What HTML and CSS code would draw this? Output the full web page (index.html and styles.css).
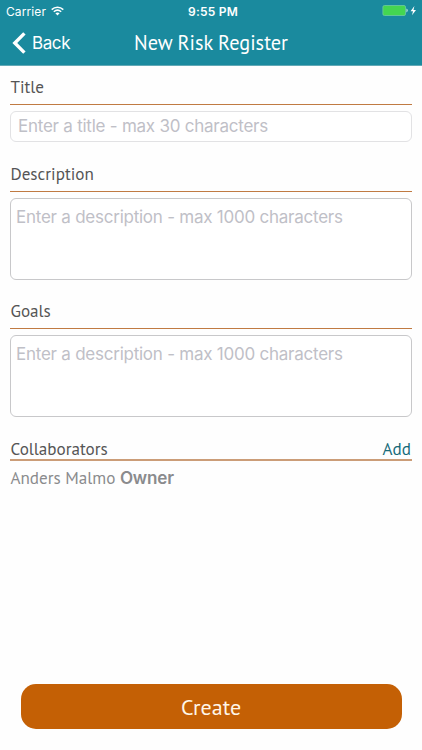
FILE: index.html
```html
<!DOCTYPE html>
<html lang="en">
  <head>
    <meta charset="UTF-8" />
    <meta name="viewport" content="width=device-width, initial-scale=1.0" />
    <title>New Risk Register</title>
    <link rel="stylesheet" href="styles.css">
  </head>
  <body>
    <header class="header">
      <div class="status-bar">
        <div class="carrier">
          <span>Carrier</span>
          <svg class="wifi" width="13" height="10" viewBox="0 0 13 10" fill="none" stroke="#fff" stroke-width="1.5">
            <path d="M0.7 3.6 C4 0.4 9 0.4 12.3 3.6" />
            <path d="M2.8 5.8 C5 3.8 8 3.8 10.2 5.8" />
            <path d="M4.4 7.3 C5.7 6.2 7.3 6.2 8.6 7.3 L6.5 9.5 Z" fill="#fff" stroke="none" />
          </svg>
        </div>
        <div class="time">9:55 PM</div>
        <div class="battery">
          <svg width="36" height="12" viewBox="0 0 36 12">
            <rect x="0.9" y="0.5" width="22.6" height="10" rx="1.5" fill="#44d651" stroke="#6fcba0" stroke-width="0.8" />
            <path d="M24.4 3.6 C26.3 4.2 26.3 6.8 24.4 7.4 Z" fill="#b5e4d8" />
            <path d="M32.4 1 L28.6 6.2 H31 L30 10.2 L34 4.9 H31.5 Z" fill="#fff" />
          </svg>
        </div>
      </div>
      <div class="nav-bar">
        <a class="back">
          <svg width="14" height="22" viewBox="0 0 14 22" fill="none" stroke="#fff" stroke-width="3.4">
            <path d="M12.4 1.4 L2.8 11 L12.4 20.6" />
          </svg>
          <span>Back</span>
        </a>
        <h1>New Risk Register</h1>
      </div>
    </header>

    <main class="form">
      <div class="form-group">
        <label for="title">Title</label>
        <input type="text" id="title" placeholder="Enter a title - max 30 characters" />
      </div>

      <div class="form-group">
        <label for="description">Description</label>
        <textarea id="description" placeholder="Enter a description - max 1000 characters"></textarea>
      </div>

      <div class="form-group">
        <label for="goals">Goals</label>
        <textarea id="goals" placeholder="Enter a description - max 1000 characters"></textarea>
      </div>

      <div class="collaborators">
        <div class="collaborators-head">
          <h2>Collaborators</h2>
          <a class="add">Add</a>
        </div>
        <p class="person"><span>Anders Malmo</span> <b>Owner</b></p>
      </div>

      <button class="create-btn">Create</button>
    </main>
  </body>
</html>
```

FILE: styles.css
```css
* {
  margin: 0;
  padding: 0;
  box-sizing: border-box;
}

body {
  font-family: "PT Sans", "Noto Sans", sans-serif;
  background: #fefefe;
  height: 750px;
  display: flex;
  flex-direction: column;
  overflow: hidden;
}

.header {
  height: 66px;
  background: #1a8a9e;
  border-bottom: 1px solid #62a9b6;
  color: white;
}

.status-bar {
  display: grid;
  grid-template-columns: 1fr auto 1fr;
  align-items: center;
  height: 22px;
  padding: 0 4px 0 6px;
  font-family: Inter, sans-serif;
  font-size: 12px;
}

.carrier {
  display: flex;
  align-items: center;
  gap: 5px;
  letter-spacing: 0.1px;
}

.time {
  padding-left: 2px;
  font-weight: 600;
  letter-spacing: 0.2px;
}

.battery {
  display: flex;
  justify-content: flex-end;
}

.nav-bar {
  display: grid;
  grid-template-columns: 1fr auto 1fr;
  align-items: center;
  height: 42px;
  padding: 0 12px;
}

.back {
  display: flex;
  align-items: center;
  gap: 6px;
  font-family: Inter, sans-serif;
  font-size: 17px;
  letter-spacing: -0.4px;
}

.nav-bar h1 {
  padding-bottom: 2px;
  font-size: 20.3px;
  font-weight: 400;
}

.form {
  flex: 1;
  display: flex;
  flex-direction: column;
  padding: 10px 10px 21px;
}

.form-group {
  display: flex;
  flex-direction: column;
}

.form-group label {
  height: 29px;
  margin-bottom: 6px;
  padding-left: 0.5px;
  border-bottom: 1px solid #c07a42;
  color: #555;
  font-size: 17.1px;
  line-height: 23px;
}

.form-group input,
.form-group textarea {
  width: 402px;
  background: white;
  font-family: Inter, sans-serif;
  font-size: 17px;
  letter-spacing: -0.24px;
  outline: none;
}

.form-group input {
  height: 31px;
  margin-bottom: 21px;
  padding: 0 7px 1px;
  border: 1px solid #e2e2e4;
  border-radius: 6px;
}

.form-group textarea {
  height: 82px;
  margin-bottom: 20px;
  padding: 8px 5px;
  border: 1px solid #c8c8ca;
  border-radius: 6px;
  line-height: 21px;
  resize: none;
}

::placeholder {
  color: #bfc0c7;
}

.collaborators-head {
  display: flex;
  justify-content: space-between;
  height: 24px;
  padding: 0 1px 0 0.5px;
  border-bottom: 2px solid #cb9d78;
  font-size: 17.1px;
  line-height: 24px;
}

.collaborators-head h2 {
  color: #555;
  font-size: 17.1px;
  font-weight: 400;
}

.add {
  color: #176b7a;
}

.person {
  margin-top: 5px;
  padding-left: 0.5px;
  color: #8a8b8d;
  font-size: 17.1px;
  line-height: 24px;
}

.person b {
  font-family: Inter, sans-serif;
  font-weight: 600;
  letter-spacing: -0.2px;
}

.create-btn {
  height: 45px;
  margin: auto 10.5px 0;
  border: none;
  border-radius: 15px;
  background: #c46005;
  color: #fff6e8;
  font-family: inherit;
  font-size: 22px;
}
```
